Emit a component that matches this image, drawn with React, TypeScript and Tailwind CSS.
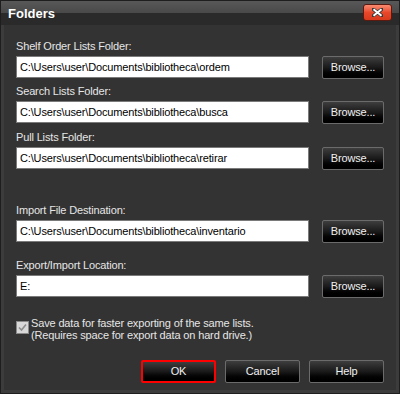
import React from 'react'

const rows = [
  { label: 'Shelf Order Lists Folder:', value: 'C:\\Users\\user\\Documents\\bibliotheca\\ordem', mt: 'mt-[14px]' },
  { label: 'Search Lists Folder:', value: 'C:\\Users\\user\\Documents\\bibliotheca\\busca', mt: 'mt-[5px]' },
  { label: 'Pull Lists Folder:', value: 'C:\\Users\\user\\Documents\\bibliotheca\\retirar', mt: 'mt-[6px]' },
  { label: 'Import File Destination:', value: 'C:\\Users\\user\\Documents\\bibliotheca\\inventario', mt: 'mt-[33px]' },
  { label: 'Export/Import Location:', value: 'E:', mt: 'mt-[15px]' },
]

function DarkButton({ children, className = '' }: { children: React.ReactNode; className?: string }) {
  return (
    <button
      className={`flex shrink-0 items-center justify-center rounded-[2px] bg-gradient-to-b from-[#3e3e3e] via-[#1a1a1a] to-[#000000] p-0 leading-none text-[#f0f0f0] ${className}`}
    >
      {children}
    </button>
  )
}

export default function App() {
  return (
    <div
      className="flex h-[394px] w-[400px] flex-col overflow-hidden border border-[#1e1e1e] bg-[#333333] text-[11px] tracking-[-0.15px]"
      style={{ fontFamily: '"Liberation Sans", Arial, sans-serif' }}
    >
      <div className="relative h-[24px] shrink-0 bg-gradient-to-b from-[#585858] to-[#3a3a3a]">
        <div className="absolute bottom-0 left-0 right-0 h-[12px] bg-[#2a2a2a]" />
        <span className="absolute left-[7px] top-[5px] text-[13px] font-bold leading-[16px] tracking-normal text-white">
          Folders
        </span>
        <div className="absolute right-[7px] top-[3px] flex h-[17px] w-[29px] items-center justify-center rounded-[3px] border border-[#5a1a10] bg-gradient-to-b from-[#f88a70] via-[#e8472a] to-[#d83a1c]">
          <svg width="11" height="9" viewBox="0 0 11 9">
            <path d="M1 1 L10 8 M10 1 L1 8" stroke="#3a3a3a" strokeWidth="3.4" strokeLinecap="square" />
            <path d="M1.5 1.2 L9.5 7.8 M9.5 1.2 L1.5 7.8" stroke="#ffffff" strokeWidth="2" />
          </svg>
        </div>
      </div>
      <div className="flex flex-1 flex-col border-x-[3px] border-b-[3px] border-[#3c3c3c] px-[12px]">
        {rows.map((r) => (
          <div key={r.label} className={`flex h-[40px] shrink-0 flex-col ${r.mt}`}>
            <div className="h-[15px] leading-[15px] text-[#e6e6e6]">{r.label}</div>
            <div className="mt-[2px] flex h-[23px] items-start">
              <div className="flex h-[22px] w-[293px] shrink-0 items-center border border-[#7a7a7a] bg-white pl-[3px] leading-none text-black">
                {r.value}
              </div>
              <DarkButton className="ml-[13px] h-[23px] w-[62px] border border-[#6b6b6b]">Browse...</DarkButton>
            </div>
          </div>
        ))}
        <div className="mt-[19px] flex h-[24px] shrink-0 items-start">
          <div className="mt-[4px] flex h-[13px] w-[13px] shrink-0 items-center justify-center border border-[#8a8a8a] bg-[#d8d8d8]">
            <svg width="9" height="9" viewBox="0 0 9 9">
              <path d="M1 4.5 L3.5 7 L8 1.5" stroke="#8c8c8c" strokeWidth="1.6" fill="none" />
            </svg>
          </div>
          <div className="ml-[2px] leading-[12px] text-[#e6e6e6]">
            Save data for faster exporting of the same lists.
            <br />
            (Requires space for export data on hard drive.)
          </div>
        </div>
        <div className="mt-[19px] flex shrink-0 justify-end gap-[9px]">
          <DarkButton className="h-[23px] w-[75px] border-2 border-[#ff0000]">OK</DarkButton>
          <DarkButton className="h-[23px] w-[75px] border border-[#6b6b6b]">Cancel</DarkButton>
          <DarkButton className="h-[23px] w-[75px] border border-[#6b6b6b]">Help</DarkButton>
        </div>
      </div>
    </div>
  )
}
